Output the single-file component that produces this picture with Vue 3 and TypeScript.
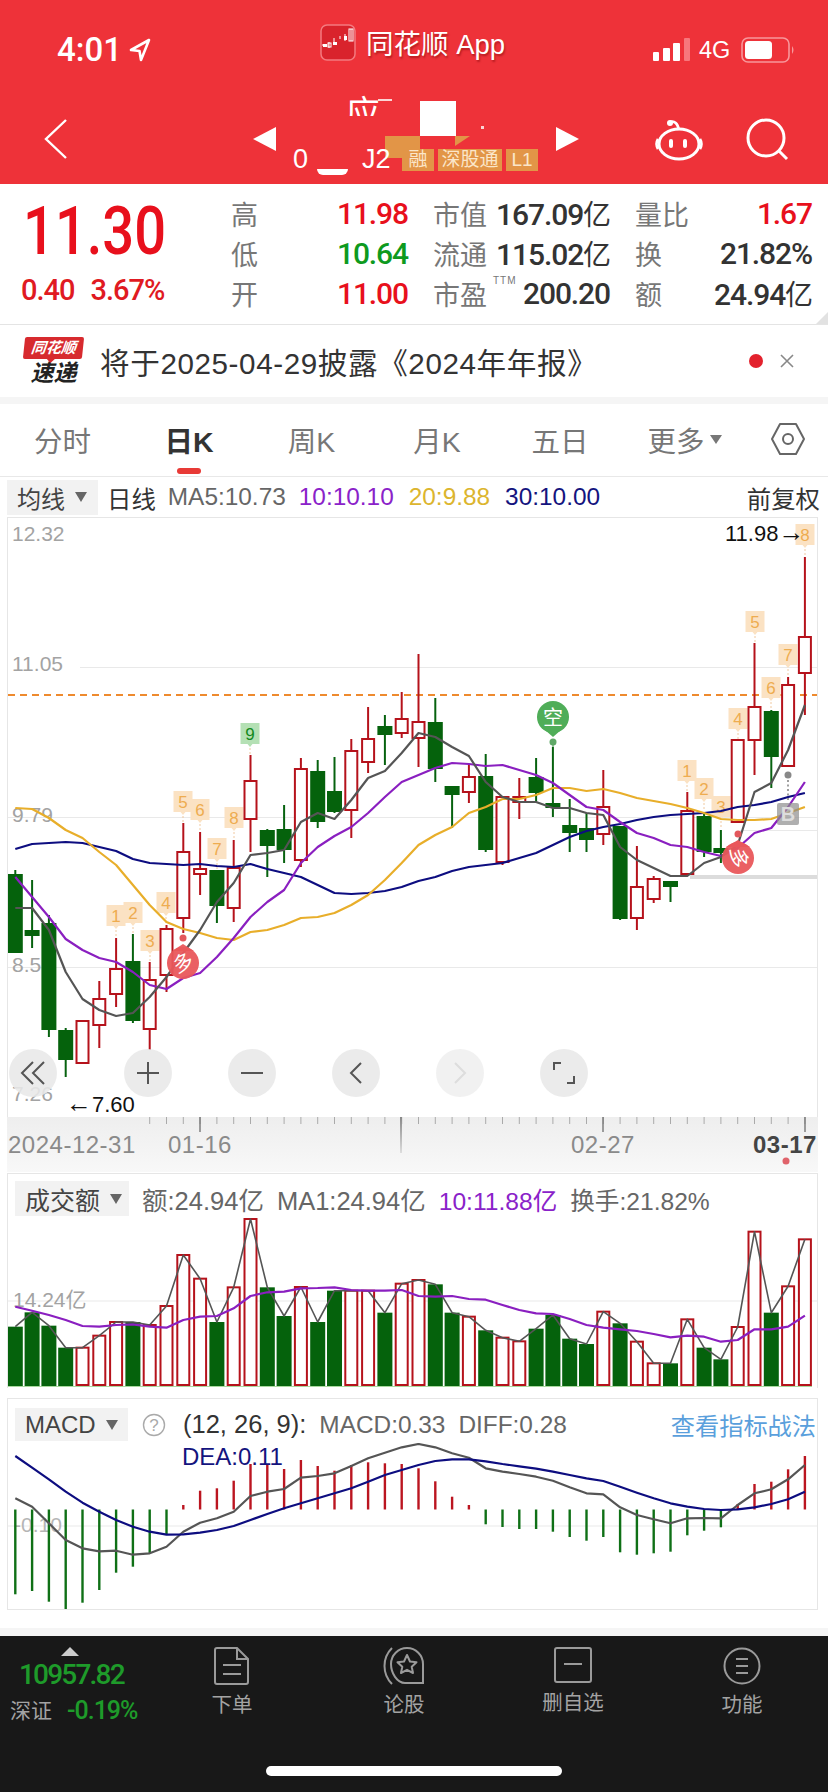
<script setup lang="ts">
// [wick top, body top, body bottom, wick bottom, rising]
type Candle = [number, number, number, number, boolean]

const candles: Candle[] = [
  [870, 874, 953, 953, false], [880, 930, 936, 948, false], [915, 923, 1030, 1037, false], [1028, 1030, 1060, 1077, false],
  [1021, 1021, 1063, 1063, true], [981, 999, 1025, 1048, true], [938, 969, 994, 1007, true], [934, 961, 1021, 1023, false],
  [962, 980, 1029, 1050, true], [925, 929, 975, 992, true], [823, 852, 918, 933, true], [832, 869, 874, 895, true],
  [870, 870, 906, 923, false], [840, 868, 908, 922, true], [755, 781, 819, 852, true], [829, 830, 846, 877, false],
  [805, 829, 850, 863, false], [758, 769, 860, 867, true], [760, 771, 822, 828, false], [757, 791, 812, 813, false],
  [739, 751, 810, 838, true], [707, 739, 762, 773, true], [715, 726, 735, 765, false], [692, 719, 733, 738, true],
  [654, 722, 738, 767, true], [698, 722, 769, 782, false], [786, 786, 795, 828, false], [765, 777, 792, 803, true],
  [754, 776, 850, 852, false], [796, 797, 862, 865, true], [778, 797, 802, 819, true], [758, 777, 793, 803, false],
  [747, 803, 808, 817, false], [799, 825, 833, 852, false], [813, 828, 840, 852, false], [770, 807, 834, 845, true],
  [826, 826, 919, 920, false], [846, 887, 918, 930, true], [876, 879, 899, 903, true], [881, 881, 887, 902, false],
  [792, 811, 874, 876, true], [812, 816, 852, 857, false], [830, 848, 853, 863, false], [740, 740, 822, 822, true],
  [643, 707, 740, 775, true], [710, 711, 757, 788, false], [677, 685, 766, 767, true], [557, 637, 673, 715, true]
]

const ma5 = [908, 908, 930, 972, 999, 1010, 1016, 1013, 997, 977, 953, 930, 902, 883, 855, 853, 850, 822, 813, 819, 800, 778, 771, 753, 733, 737, 747, 756, 782, 797, 802, 802, 808, 808, 813, 815, 847, 860, 868, 876, 876, 863, 857, 845, 792, 783, 750, 705]
const ma10 = [877, 897, 917, 939, 950, 958, 962, 972, 985, 989, 978, 973, 957, 938, 917, 902, 890, 863, 847, 836, 827, 813, 797, 782, 775, 768, 763, 764, 766, 765, 770, 775, 783, 795, 807, 810, 822, 833, 838, 845, 847, 852, 856, 848, 833, 828, 807, 782]
const ma20 = [808, 809, 818, 830, 838, 852, 865, 885, 905, 922, 929, 933, 938, 940, 932, 930, 925, 918, 917, 913, 905, 895, 880, 863, 845, 835, 827, 813, 807, 799, 799, 795, 788, 788, 791, 789, 793, 798, 801, 804, 808, 813, 819, 820, 820, 819, 813, 807]
const ma30 = [849, 844, 843, 842, 843, 847, 851, 859, 863, 864, 865, 864, 866, 867, 864, 869, 873, 877, 885, 893, 894, 893, 891, 887, 881, 877, 871, 867, 865, 863, 858, 853, 845, 837, 831, 827, 824, 820, 817, 815, 814, 813, 811, 807, 805, 802, 797, 793]

const xAt = (i: number) => 15.3 + 16.8 * i
const line = (ys: number[]) => ys.map((y, i) => `${xAt(i).toFixed(1)},${y.toFixed(1)}`).join(' ')

const tags = [
  { n: 1, x: 116, y: 916 }, { n: 2, x: 133, y: 913 }, { n: 3, x: 150, y: 941 }, { n: 4, x: 166, y: 903 },
  { n: 5, x: 183, y: 802 }, { n: 6, x: 200, y: 810 }, { n: 7, x: 217, y: 849 }, { n: 8, x: 234, y: 818 },
  { n: 9, x: 250, y: 734, buy: true },
  { n: 1, x: 687, y: 771 }, { n: 2, x: 704, y: 789 }, { n: 3, x: 721, y: 807 }, { n: 4, x: 738, y: 719 },
  { n: 5, x: 755, y: 622 }, { n: 6, x: 771, y: 688 }, { n: 7, x: 788, y: 655 }, { n: 8, x: 805, y: 535 }
]

// volume panel, tops as read at panel scale (y = 1170 + v / 3)
const volTops = [470, 427, 467, 533, 533, 497, 456, 456, 465, 408, 255, 326, 456, 352, 147, 352, 438, 351, 456, 362, 362, 362, 428, 341, 330, 343, 428, 440, 481, 503, 514, 476, 435, 506, 522, 425, 460, 515, 580, 580, 448, 533, 568, 471, 185, 428, 349, 208].map(v => 1170 + v / 3)
const volMa = [410, 422, 435, 450, 468, 470, 465, 463, 470, 473, 450, 440, 438, 415, 378, 367, 365, 355, 354, 352, 360, 362, 362, 360, 378, 380, 378, 387, 389, 405, 420, 430, 432, 447, 465, 473, 478, 483, 492, 502, 497, 500, 515, 510, 478, 478, 470, 437].map(v => 1170 + v / 3)

// macd panel (y = 1390 + v / 3)
const macdEnds = [613, 603, 635, 658, 638, 600, 548, 530, 490, 432, 345, 302, 295, 272, 222, 225, 237, 210, 228, 242, 225, 217, 220, 222, 235, 274, 320, 345, 403, 411, 417, 417, 425, 441, 452, 441, 487, 494, 490, 485, 436, 422, 412, 342, 282, 275, 238, 198].map(v => 1390 + v / 3)
const diff = [325, 350, 400, 450, 475, 484, 482, 494, 490, 470, 425, 398, 385, 365, 318, 305, 297, 263, 258, 250, 228, 205, 188, 172, 162, 172, 190, 203, 235, 245, 252, 260, 272, 292, 310, 313, 352, 375, 388, 400, 385, 384, 385, 345, 310, 298, 268, 225].map(v => 1390 + v / 3)
const dea = [198, 233, 268, 305, 338, 365, 390, 410, 425, 434, 433, 428, 420, 408, 390, 372, 355, 340, 325, 310, 295, 275, 255, 240, 225, 213, 208, 208, 214, 222, 229, 236, 245, 255, 265, 273, 290, 308, 325, 340, 350, 357, 360, 358, 352, 342, 328, 305].map(v => 1390 + v / 3)
const macdZero = 1509.5

const tabs = ['分时', '日K', '周K', '月K', '五日']
const stats = [
  [{ k: '高', v: '11.98', c: 'up' }, { k: '市值', v: '167.09', u: '亿' }, { k: '量比', v: '1.67', c: 'up' }],
  [{ k: '低', v: '10.64', c: 'down' }, { k: '流通', v: '115.02', u: '亿' }, { k: '换', v: '21.82%' }],
  [{ k: '开', v: '11.00', c: 'up' }, { k: '市盈', v: '200.20', ttm: true }, { k: '额', v: '24.94', u: '亿' }]
]
</script>

<template>
  <div class="page">
    <header class="top">
      <div class="status">
        <div class="clock">
          <span>4:01</span>
          <svg width="22" height="24" viewBox="0 0 22 24"><path d="M20 2 L2 12 L10.5 13 L12 22 Z" fill="none" stroke="#fff" stroke-width="2.6" stroke-linejoin="round" /></svg>
        </div>
        <div class="app-name">
          <svg width="36" height="37" viewBox="0 0 36 37">
            <rect x="1" y="1" width="34" height="35" rx="6" fill="#d9232c" stroke="#f47a7f" stroke-width="1.5" />
            <path d="M2 21 H7 M9 24 V18 M14 18 V14 M20 15 V12 M25 10 V17 M31 5 V17" stroke="#fff" stroke-width="1" />
            <rect x="3" y="20" width="4" height="3" fill="#fff" />
            <rect x="8" y="19" width="3" height="4" fill="none" stroke="#fff" />
            <rect x="13" y="18" width="4" height="3" fill="#fff" />
            <rect x="24" y="12" width="3" height="4" fill="#fff" />
            <rect x="29" y="5" width="4" height="12" fill="none" stroke="#fff" />
          </svg>
          <span>同花顺 App</span>
        </div>
        <svg class="sys" width="146" height="28" viewBox="0 0 146 28">
          <rect x="0" y="15" width="6" height="9" rx="1" fill="#fff" />
          <rect x="10" y="11" width="7" height="13" rx="1" fill="#fff" />
          <rect x="20" y="6" width="7" height="18" rx="1" fill="#fff" />
          <rect x="31" y="1" width="6" height="23" rx="1" fill="#f7777c" />
          <text x="46" y="21" class="sys-4g">4G</text>
          <rect x="89" y="1" width="47" height="24" rx="6" fill="none" stroke="#f8979b" stroke-width="1.6" />
          <rect x="92" y="4" width="27" height="18" rx="3.5" fill="#fff" />
          <path d="M139 9 Q142 13 139 17 Z" fill="#f8979b" />
        </svg>
      </div>
      <div class="nav">
        <svg class="back" width="23" height="40" viewBox="0 0 23 40"><path d="M22 1 L2 20 L22 39" fill="none" stroke="#fff" stroke-width="2.4" /></svg>
        <i class="tri tri-l"></i>
        <div class="title">
          <!-- the reference has the name painted over -->
          <span class="mask-name">应</span>
          <i class="mask-cover"></i>
          <i class="mask-stroke"></i>
          <i class="mask-white"></i>
          <i class="mask-orange"></i>
          <i class="mask-wedge"></i>
          <i class="mask-smear"></i>
          <i class="mask-dot"></i>
          <div class="code-row">
            <span class="code">0</span>
            <span class="code code-tail">J2</span>
            <span class="chip chip-a">融</span>
            <span class="chip chip-b">深股通</span>
            <span class="chip chip-c">L1</span>
          </div>
        </div>
        <i class="tri tri-r"></i>
        <svg class="robot" width="48" height="46" viewBox="0 0 48 46">
          <path d="M15 4 Q22 2 24 12" fill="none" stroke="#fff" stroke-width="2.6" />
          <circle cx="15" cy="5" r="3" fill="#fff" />
          <ellipse cx="24" cy="26" rx="20" ry="15" fill="none" stroke="#fff" stroke-width="3" />
          <path d="M3 21 Q0 26 3 31 M45 21 Q48 26 45 31" fill="none" stroke="#fff" stroke-width="2.6" />
          <rect x="14" y="21" width="4" height="9" rx="2" fill="#fff" />
          <rect x="28" y="21" width="4" height="9" rx="2" fill="#fff" />
        </svg>
        <svg class="search" width="44" height="44" viewBox="0 0 44 44">
          <circle cx="20" cy="20" r="18" fill="none" stroke="#fff" stroke-width="3" />
          <path d="M33 33 L41 41" stroke="#fff" stroke-width="3" />
        </svg>
      </div>
    </header>

    <section class="quote">
      <div class="price">
        <div class="price-val">11.30</div>
        <div class="price-chg"><span>0.40</span><span>3.67%</span></div>
      </div>
      <div class="stats">
        <template v-for="(row, r) in stats" :key="r">
          <div v-for="cell in row" :key="cell.k" class="stat">
            <span class="stat-k">{{ cell.k }}<sup v-if="cell.ttm">TTM</sup></span>
            <span class="stat-v" :class="cell.c">{{ cell.v }}<em v-if="cell.u">{{ cell.u }}</em></span>
          </div>
        </template>
      </div>
      <i class="corner"></i>
    </section>

    <section class="news">
      <div class="news-logo">
        <div class="news-tag">同花顺</div>
        <div class="news-sub">速递</div>
      </div>
      <div class="news-text">将于2025-04-29披露《2024年年报》</div>
      <i class="news-dot"></i>
      <svg width="14" height="14" viewBox="0 0 14 14"><path d="M1 1 L13 13 M13 1 L1 13" stroke="#888" stroke-width="1.6" /></svg>
    </section>
    <div class="strip"></div>

    <nav class="tabs">
      <div v-for="(t, i) in tabs" :key="t" class="tab" :class="{ active: i === 1 }">{{ t }}</div>
      <div class="tab">更多<i class="tab-caret"></i></div>
      <div class="tab">
        <svg width="36" height="34" viewBox="0 0 36 34">
          <path d="M10 2 H26 L34 17 L26 32 H10 L2 17 Z" fill="none" stroke="#666" stroke-width="2" stroke-linejoin="round" />
          <circle cx="18" cy="17" r="5" fill="none" stroke="#666" stroke-width="2" />
        </svg>
      </div>
    </nav>

    <div class="legend">
      <div class="select select-ma">均线<i></i></div>
      <span class="legend-day">日线</span>
      <span class="l-grey">MA5:10.73</span>
      <span class="l-purple">10:10.10</span>
      <span class="l-gold">20:9.88</span>
      <span class="l-navy">30:10.00</span>
      <span class="legend-adj">前复权</span>
    </div>

    <div class="chart">
      <svg width="809" height="599" viewBox="8 518 809 599" class="plot">
        <g class="grid">
          <path d="M80 667.5 H817 M8 817.5 H817 M8 967.5 H817 M740 830.5 H817" />
          <path d="M690 877 H817" class="grid-thick" />
        </g>
        <path d="M8 695 H817" stroke="#ee8a2e" stroke-width="2" stroke-dasharray="7 5" />
        <text x="12" y="541" class="y-label">12.32</text>
        <text x="12" y="671" class="y-label">11.05</text>
        <text x="12" y="822" class="y-label">9.79</text>
        <text x="12" y="972" class="y-label">8.53</text>
        <text x="12" y="1101" class="y-label">7.26</text>

        <g v-for="(t, i) in tags" :key="i">
          <path :d="`M${t.x} ${t.y + 14} V${t.y + 22}`" stroke="#f0c9a0" stroke-width="1" stroke-dasharray="2 2" />
          <path :d="`M${t.x - 9.5} ${t.y - 11} h19 v21 h-7 l-2.5 3 l-2.5 -3 h-7 z`" :fill="t.buy ? '#b4e0b4' : '#fbe2c3'" />
          <text :x="t.x" :y="t.y + 6" class="tag-n" :class="{ 'tag-buy': t.buy }">{{ t.n }}</text>
        </g>

        <g v-for="(c, i) in candles" :key="i">
          <path :d="`M${xAt(i)} ${c[0]} V${c[3]}`" :stroke="c[4] ? '#b5121b' : '#07620f'" stroke-width="2" />
          <rect v-if="c[4]" :x="xAt(i) - 6" :y="c[1]" width="12" :height="c[2] - c[1]" fill="#fff" stroke="#b5121b" stroke-width="2" />
          <rect v-else :x="xAt(i) - 7.5" :y="c[1]" width="15" :height="c[2] - c[1]" fill="#05620c" />
        </g>

        <polyline :points="line(ma30)" class="ma navy" />
        <polyline :points="line(ma20)" class="ma gold" />
        <polyline :points="line(ma10)" class="ma purple" />
        <polyline :points="line(ma5)" class="ma grey" />

        <!-- buy / sell signals -->
        <g>
          <circle cx="183" cy="938" r="3.5" fill="#e3585c" />
          <path d="M172 951 L183 944 L194 951 Z" fill="#e9575b" opacity=".95" />
          <circle cx="183" cy="963" r="16" fill="#e9575b" opacity=".95" />
          <text x="183" y="970" class="sig" transform="rotate(-25 183 963)">多</text>
        </g>
        <g>
          <circle cx="738" cy="834" r="3.5" fill="#e3585c" />
          <circle cx="738" cy="858" r="16" fill="#e9575b" opacity=".95" />
          <path d="M726 847 L738 840 L750 847 Z" fill="#e9575b" />
          <text x="738" y="865" class="sig" transform="rotate(90 738 858)">多</text>
        </g>
        <g>
          <path d="M553 747 V744" stroke="#2d8a39" />
          <circle cx="553" cy="742" r="3.5" fill="#5fa867" />
          <circle cx="553" cy="717" r="16" fill="#4fad58" />
          <path d="M545 730 L553 737 L561 730 Z" fill="#4fad58" />
          <text x="553" y="725" class="sig">空</text>
        </g>
        <g>
          <circle cx="788" cy="775" r="3.5" fill="#888" />
          <path d="M788 780 V802" stroke="#888" stroke-width="1.6" stroke-dasharray="2 2.5" />
          <rect x="777" y="803" width="22" height="22" rx="2" fill="#8d8d8d" opacity=".7" />
          <text x="788" y="821" class="sig sig-b">B</text>
        </g>

        <text x="725" y="541" class="extreme">11.98<tspan class="arrow">→</tspan></text>
        <text x="66" y="1112" class="extreme"><tspan class="arrow">←</tspan>7.60</text>
      </svg>

      <div class="zoom-btns">
        <button class="zoom-btn first">
          <svg width="26" height="26" viewBox="0 0 26 26"><path d="M13 2 L2 13 L13 24 M24 2 L13 13 L24 24" fill="none" stroke="#555" stroke-width="2" /></svg>
        </button>
        <button class="zoom-btn">
          <svg width="24" height="24" viewBox="0 0 24 24"><path d="M1 12 H23 M12 1 V23" stroke="#555" stroke-width="2" /></svg>
        </button>
        <button class="zoom-btn">
          <svg width="24" height="24" viewBox="0 0 24 24"><path d="M1 12 H23" stroke="#555" stroke-width="2" /></svg>
        </button>
        <button class="zoom-btn">
          <svg width="14" height="24" viewBox="0 0 14 24"><path d="M12 2 L2 12 L12 22" fill="none" stroke="#555" stroke-width="2" /></svg>
        </button>
        <button class="zoom-btn off">
          <svg width="14" height="24" viewBox="0 0 14 24"><path d="M2 2 L12 12 L2 22" fill="none" stroke="#ddd" stroke-width="2" /></svg>
        </button>
        <button class="zoom-btn">
          <svg width="22" height="22" viewBox="0 0 22 22"><path d="M1 8 V1 H8 M14 21 H21 V14" fill="none" stroke="#555" stroke-width="2" /></svg>
        </button>
      </div>
    </div>

    <svg class="axis" width="811" height="55" viewBox="7 1117 811 55">
      <defs>
        <linearGradient id="axisFade" x1="0" y1="0" x2="0" y2="1">
          <stop offset="0" stop-color="#eeeeee" />
          <stop offset="1" stop-color="#f8f8f8" />
        </linearGradient>
        <linearGradient id="axisTick" x1="0" y1="0" x2="0" y2="1">
          <stop offset="0" stop-color="#888" />
          <stop offset="1" stop-color="#ddd" />
        </linearGradient>
      </defs>
      <rect x="7" y="1117" width="811" height="55" fill="url(#axisFade)" />
      <path v-for="i in 40" :key="i" :d="`M${xAt(i + 7).toFixed(1)} 1117 v7`" stroke="#aaa" stroke-width="1" />
      <path d="M200 1117 v15 M603 1117 v15 M805 1117 v15" stroke="#777" stroke-width="1.4" />
      <rect x="400" y="1117" width="2" height="36" fill="url(#axisTick)" />
      <text x="8" y="1153" class="axis-t">2024-12-31</text>
      <text x="168" y="1153" class="axis-t">01-16</text>
      <text x="571" y="1153" class="axis-t">02-27</text>
      <text x="753" y="1153" class="axis-t axis-now">03-17</text>
      <circle cx="786" cy="1161" r="3.5" fill="#e0636b" />
    </svg>

    <div class="panel panel-vol">
      <div class="panel-head">
        <div class="select select-vol">成交额<i></i></div>
        <span class="l-grey">额:24.94亿</span>
        <span class="l-grey">MA1:24.94亿</span>
        <span class="l-purple tight">10:11.88亿</span>
        <span class="l-grey tight">换手:21.82%</span>
      </div>
      <svg width="809" height="170" viewBox="8 1218 809 170" class="plot">
        <path d="M8 1301 H817" class="grid-line" />
        <text x="13" y="1307" class="y-label">14.24亿</text>
        <g v-for="(top, i) in volTops" :key="i">
          <rect v-if="candles[i][4]" :x="xAt(i) - 6" :y="top" width="12" :height="1385 - top" fill="#fff" stroke="#b5121b" stroke-width="2" />
          <rect v-else :x="xAt(i) - 7.5" :y="top" width="15" :height="1386 - top" fill="#05620c" />
        </g>
        <path d="M8 1386.5 H812" stroke="#a9d99f" />
        <polyline :points="line(volTops)" class="ma ma-thin grey" />
        <polyline :points="line(volMa)" class="ma purple" />
      </svg>
    </div>

    <div class="panel panel-macd">
      <div class="panel-head">
        <div class="select select-macd">MACD<i></i></div>
        <svg class="help" width="24" height="24" viewBox="0 0 24 24">
          <circle cx="12" cy="12" r="10.5" fill="none" stroke="#aaa" stroke-width="1.4" />
          <text x="12" y="18" class="help-q">?</text>
        </svg>
        <span class="l-dark">(12, 26, 9):</span>
        <span class="l-grey small">MACD:0.33</span>
        <span class="l-grey small">DIFF:0.28</span>
        <span class="macd-link">查看指标战法</span>
      </div>
      <svg width="809" height="166" viewBox="8 1443 809 166" class="plot">
        <path d="M8 1526 H817" class="grid-line" />
        <text x="14" y="1532" class="y-label y-faint">-0.10</text>
        <text x="182" y="1465" class="dea">DEA:0.11</text>
        <path v-for="(end, i) in macdEnds" :key="i" :d="`M${xAt(i)} ${macdZero} V${end.toFixed(1)}`" :stroke="end < macdZero ? '#bb1520' : '#0f7016'" stroke-width="2.4" />
        <polyline :points="line(diff)" class="ma grey" />
        <polyline :points="line(dea)" class="ma navy" />
      </svg>
    </div>

    <div class="gap"></div>
    <div class="strip strip-low"></div>

    <footer class="bottom">
      <div class="bottom-row">
        <div class="index">
          <i class="index-up"></i>
          <div class="index-val">10957.82</div>
          <div class="index-sub"><span>深证</span><b>-0.19%</b></div>
        </div>
        <div class="action">
          <svg width="36" height="38" viewBox="0 0 36 38">
            <path d="M3 1 H23 L34 12 V35 Q34 37 32 37 H3 Q1 37 1 35 V3 Q1 1 3 1 Z M23 1 V12 H34 M9 18 H27 M9 27 H27" fill="none" stroke="#9a9a9a" stroke-width="2" />
          </svg>
          <span>下单</span>
        </div>
        <div class="action">
          <svg width="42" height="38" viewBox="0 0 42 38">
            <path d="M40 36 V17 A16 16 0 0 0 8 17 C8 26 14 36 22 36 Z" fill="none" stroke="#9a9a9a" stroke-width="2" />
            <path d="M9 1 C-1 11 -1 27 9 37" fill="none" stroke="#9a9a9a" stroke-width="2" />
            <path d="M24 8 L27 14.5 L33.5 15.2 L28.7 19.7 L30 26 L24 22.8 L18 26 L19.3 19.7 L14.5 15.2 L21 14.5 Z" fill="none" stroke="#9a9a9a" stroke-width="2" stroke-linejoin="round" />
          </svg>
          <span>论股</span>
        </div>
        <div class="action">
          <svg width="38" height="36" viewBox="0 0 38 36">
            <rect x="1" y="1" width="36" height="34" rx="2" fill="none" stroke="#9a9a9a" stroke-width="2" />
            <path d="M10 17 H28" stroke="#9a9a9a" stroke-width="2" />
          </svg>
          <span>删自选</span>
        </div>
        <div class="action">
          <svg width="38" height="38" viewBox="0 0 38 38">
            <circle cx="19" cy="19" r="17.5" fill="none" stroke="#9a9a9a" stroke-width="2" />
            <path d="M13 12 H25 M13 19 H25 M13 26 H25" stroke="#9a9a9a" stroke-width="2" />
          </svg>
          <span>功能</span>
        </div>
      </div>
      <div class="home-bar"></div>
    </footer>
  </div>
</template>

<style scoped>
.page {
  width: 828px;
  height: 1792px;
  overflow: hidden;
  background: #fff;
  font-family: "Liberation Sans", "Noto Sans CJK SC", sans-serif;
  color: #333;
}
i {
  display: block;
}

/* header */
.top {
  height: 184px;
  background: #ee3239;
  color: #fff;
}
.status {
  height: 102px;
  display: flex;
  align-items: flex-start;
}
.clock {
  width: 320px;
  padding: 30px 0 0 57px;
  box-sizing: border-box;
  display: flex;
  align-items: center;
  gap: 7px;
  font: 500 33px Roboto, sans-serif;
  line-height: 40px;
}
.app-name {
  width: 333px;
  padding-top: 22px;
  display: flex;
  align-items: center;
  gap: 10px;
  font-size: 27.5px;
  text-shadow: 1px 2px 2px rgba(110, 0, 0, 0.45);
}
.sys {
  margin-top: 37px;
}
.sys-4g {
  font: 500 23.5px "Liberation Sans", sans-serif;
  fill: #fff;
}
.nav {
  height: 82px;
  display: flex;
  align-items: center;
  padding: 0 0 8px 44px;
  box-sizing: border-box;
}
.tri {
  width: 0;
  height: 0;
  border-top: 12px solid transparent;
  border-bottom: 12px solid transparent;
}
.tri-l {
  margin-left: 186px;
  border-right: 23px solid #fff;
}
.tri-r {
  border-left: 23px solid #fff;
}
.title {
  position: relative;
  width: 280px;
  height: 82px;
}
.code-row {
  position: absolute;
  left: 17px;
  top: 46px;
  display: flex;
  align-items: center;
  font-size: 24px;
}
.code {
  font-size: 27px;
  width: 69px;
}
.code-tail {
  width: 40px;
}
.chip {
  height: 22px;
  line-height: 22px;
  font-size: 19px;
  text-align: center;
  background: #e29547;
  color: #fbe6c9;
  margin-right: 4px;
}
.chip-a {
  width: 32px;
}
.chip-b {
  width: 64px;
}
.chip-c {
  width: 32px;
}
.mask-name {
  position: absolute;
  left: 70px;
  top: -2px;
  font-size: 34px;
  line-height: 34px;
}
.mask-cover {
  position: absolute;
  left: 60px;
  top: 18px;
  width: 50px;
  height: 26px;
  background: #ee3239;
}
.mask-stroke {
  position: absolute;
  left: 102px;
  top: 1px;
  width: 14px;
  height: 2px;
  background: #fbd5d5;
}
.mask-white {
  position: absolute;
  left: 144px;
  top: 3px;
  width: 36px;
  height: 35px;
  background: #fff;
}
.mask-orange {
  position: absolute;
  left: 109px;
  top: 38px;
  width: 35px;
  height: 22px;
  background: #e29547;
}
.mask-wedge {
  position: absolute;
  left: 179px;
  top: 38px;
  border-top: 10px solid #e29547;
  border-right: 15px solid transparent;
}
.mask-smear {
  position: absolute;
  left: 41px;
  top: 71px;
  width: 31px;
  height: 6px;
  border-radius: 0 0 15px 15px;
  background: #fff;
}
.mask-dot {
  position: absolute;
  left: 205px;
  top: 28px;
  width: 3px;
  height: 3px;
  background: #fbd5d5;
}
.robot {
  margin-left: 76px;
  margin-top: 4px;
}
.search {
  margin-left: 43px;
  margin-top: 2px;
}

/* quote */
.quote {
  position: relative;
  height: 141px;
  display: flex;
  border-bottom: 1px solid #e4e4e4;
  box-sizing: border-box;
}
.price {
  width: 231px;
  color: #e8101c;
}
.price-val {
  padding: 13px 0 0 23px;
  font: 500 66px/70px Roboto, sans-serif;
  transform: scaleX(0.85);
  transform-origin: 23px 0;
}
.price-chg {
  display: flex;
  gap: 16px;
  padding: 6px 0 0 21px;
  font: 500 29px/34px Roboto, sans-serif;
  letter-spacing: -1px;
  color: #e01a22;
}
.stats {
  display: grid;
  grid-template-columns: 177px 177px 177px;
  grid-auto-rows: 40px;
  column-gap: 25px;
  padding-top: 9px;
}
.stat {
  display: flex;
  align-items: center;
  justify-content: space-between;
}
.stat-k {
  position: relative;
  font-size: 27px;
  color: #777;
}
.stat-k sup {
  position: absolute;
  left: 100%;
  top: 2px;
  margin-left: 6px;
  font-size: 10px;
  line-height: 10px;
  letter-spacing: 1px;
}
.stat-v {
  font: 500 30px Roboto, "Noto Sans CJK SC", sans-serif;
  letter-spacing: -1.1px;
  color: #333;
}
.stat-v em {
  font-style: normal;
  font-weight: 400;
  font-size: 28px;
}
.stat-v.up {
  color: #e8101c;
}
.stat-v.down {
  color: #0e9a1e;
}
.corner {
  position: absolute;
  right: 0;
  bottom: 0;
  border-bottom: 12px solid #e2e2e2;
  border-left: 12px solid transparent;
}

/* news */
.news {
  height: 72px;
  display: flex;
  align-items: center;
  padding-left: 24px;
}
.news-logo {
  position: relative;
  width: 59px;
  text-align: center;
}
.news-tag {
  height: 22px;
  line-height: 22px;
  background: #d72a2e;
  color: #fff;
  font-size: 15px;
  font-weight: 700;
  font-style: italic;
  transform: skewX(-6deg);
  border-radius: 2px;
}
.news-tag::after {
  content: "";
  position: absolute;
  left: 24px;
  top: 22px;
  border-top: 4px solid #d72a2e;
  border-left: 4px solid transparent;
  border-right: 4px solid transparent;
}
.news-sub {
  margin-top: 1px;
  font-size: 23px;
  line-height: 26px;
  font-weight: 700;
  font-style: italic;
  color: #222;
}
.news-text {
  width: 649px;
  margin-left: 17px;
  font-size: 29.6px;
  letter-spacing: 0.6px;
  color: #333;
  white-space: nowrap;
}
.news-dot {
  width: 14px;
  height: 14px;
  border-radius: 50%;
  background: #e3212d;
  margin-right: 17px;
}
.strip {
  height: 7px;
  background: #f5f5f5;
}

/* tabs */
.tabs {
  height: 73px;
  display: grid;
  grid-template-columns: 125px 128px 117px 134px 112px 137px 70px;
  align-items: center;
  padding-bottom: 2px;
  border-bottom: 1px solid #e8e8e8;
  box-sizing: border-box;
}
.tab {
  position: relative;
  display: flex;
  align-items: center;
  justify-content: center;
  font-size: 28.5px;
  color: #777;
}
.tab.active {
  color: #333;
  font-weight: 700;
}
.tab.active::after {
  content: "";
  position: absolute;
  left: 52px;
  top: 49px;
  width: 24px;
  height: 6px;
  border-radius: 3px;
  background: #e83a36;
}
.tab-caret {
  margin-left: 5px;
  border-top: 9px solid #777;
  border-left: 6px solid transparent;
  border-right: 6px solid transparent;
}

/* legend row */
.legend {
  height: 40px;
  display: flex;
  align-items: center;
  padding-left: 7px;
  font-size: 24.4px;
  white-space: nowrap;
}
.select {
  display: flex;
  align-items: center;
  background: #f2f2f2;
  color: #444;
  box-sizing: border-box;
}
.select i {
  margin-left: 10px;
  border-top: 10px solid #666;
  border-left: 6px solid transparent;
  border-right: 6px solid transparent;
}
.select-ma {
  width: 91px;
  height: 35px;
  padding-left: 10px;
  font-size: 24px;
}
.legend-day {
  margin: 0 12px 0 9px;
  color: #333;
}
.legend-adj {
  margin-left: auto;
  margin-right: 8px;
  color: #333;
}
.legend .l-purple {
  margin-left: 13px;
}
.legend .l-gold,
.legend .l-navy {
  margin-left: 15px;
}
.l-grey {
  color: #666;
}
.l-purple {
  color: #8a22c9;
}
.l-gold {
  color: #dcb52e;
}
.l-navy {
  color: #14147e;
}
.l-dark {
  color: #333;
}

/* main chart */
.chart {
  position: relative;
  width: 811px;
  height: 600px;
  margin-left: 7px;
  border: 1px solid #e6e6e6;
  border-bottom: 0;
  box-sizing: border-box;
}
.plot {
  display: block;
}
.grid path,
.grid-line {
  stroke: #e9e9e9;
  stroke-width: 1;
  fill: none;
}
.grid .grid-thick {
  stroke: #dcdcdc;
  stroke-width: 4;
}
.y-label {
  font-size: 21px;
  fill: #a3a3a3;
}
.y-faint {
  fill: #b5b5b5;
}
.tag-n {
  font-size: 17px;
  fill: #eeac50;
  text-anchor: middle;
}
.tag-buy {
  fill: #12891d;
}
.ma {
  fill: none;
  stroke-width: 2.2;
  stroke-linejoin: round;
}
.ma-thin {
  stroke-width: 1.6;
}
.navy {
  stroke: #0d0d80;
}
.gold {
  stroke: #e8ae2a;
}
.purple {
  stroke: #8a1fc0;
}
.grey {
  stroke: #555;
}
.sig {
  font-size: 20px;
  fill: #fff;
  text-anchor: middle;
}
.sig-b {
  font-weight: 700;
  fill: #ddd;
}
.extreme {
  font-size: 22px;
  fill: #111;
}
.arrow {
  font-size: 26px;
}
.zoom-btns {
  position: absolute;
  left: 1px;
  top: 531px;
  display: flex;
  gap: 56px;
}
.zoom-btn {
  width: 48px;
  height: 48px;
  padding: 0;
  display: flex;
  align-items: center;
  justify-content: center;
  border: 0;
  border-radius: 50%;
  background: rgba(232, 232, 232, 0.88);
}
.zoom-btn.first {
  margin-right: 11px;
}
.zoom-btn.off {
  background: rgba(240, 240, 240, 0.9);
}

/* date axis */
.axis {
  display: block;
  margin: 0 0 1px 7px;
}
.axis-t {
  font-size: 24px;
  letter-spacing: 0.5px;
  fill: #8a8a8a;
}
.axis-now {
  font-weight: 700;
  fill: #444;
}

/* sub panels */
.panel {
  width: 811px;
  margin-left: 7px;
  border: 1px solid #e6e6e6;
  box-sizing: border-box;
}
.panel-vol {
  height: 215px;
  border-bottom: 0;
  margin-bottom: 10px;
}
.panel-macd {
  height: 212px;
}
.panel-head {
  display: flex;
  align-items: center;
  gap: 13px;
  padding-left: 7px;
  font-size: 25.5px;
  white-space: nowrap;
}
.panel-head .tight {
  font-size: 24.6px;
}
.panel-head .small {
  font-size: 24.4px;
}
.panel-vol .panel-head {
  height: 35px;
  margin: 7px 0 2px;
}
.panel-macd .panel-head {
  height: 33px;
  margin: 9px 0 2px;
}
.select-vol {
  width: 114px;
  height: 35px;
  padding-left: 10px;
  font-size: 25px;
}
.select-vol i {
  margin-left: 10px;
}
.select-macd {
  width: 113px;
  height: 33px;
  padding-left: 10px;
  font-size: 24px;
}
.help {
  margin-left: 1px;
  margin-right: 4px;
}
.help-q {
  font-size: 17px;
  fill: #aaa;
  text-anchor: middle;
}
.macd-link {
  margin-left: auto;
  margin-right: 1px;
  font-size: 24.2px;
  color: #5a9fdc;
}
.dea {
  font-size: 24px;
  fill: #14147e;
}
.gap {
  height: 18px;
}
.strip-low {
  height: 8px;
}

/* bottom bar */
.bottom {
  height: 156px;
  background: #181818;
  color: #a3a3a3;
}
.bottom-row {
  height: 130px;
  display: grid;
  grid-template-columns: 148px 168px 176px 162px 176px;
}
.index {
  position: relative;
}
.index-up {
  margin: 11px 0 0 61px;
  width: 0;
  border-bottom: 9px solid #ccc;
  border-left: 9px solid transparent;
  border-right: 9px solid transparent;
}
.index-val {
  padding: 3px 0 0 19px;
  font: 500 28px/32px Roboto, sans-serif;
  letter-spacing: -1.8px;
  color: #1e9b2a;
}
.index-sub {
  display: flex;
  align-items: center;
  padding: 5px 0 0 10px;
  gap: 15px;
  font-size: 21px;
  line-height: 30px;
}
.index-sub b {
  font: 500 25px/30px Roboto, sans-serif;
  letter-spacing: -1px;
  color: #1e9b2a;
}
.action {
  display: flex;
  flex-direction: column;
  align-items: center;
  gap: 6px;
  padding-top: 11px;
  height: 96px;
  box-sizing: border-box;
  font-size: 20.5px;
  line-height: 28px;
}
.home-bar {
  width: 296px;
  height: 10px;
  margin-left: 266px;
  border-radius: 5px;
  background: #fff;
}
</style>

<style>
html,
body {
  margin: 0;
  padding: 0;
}
</style>
